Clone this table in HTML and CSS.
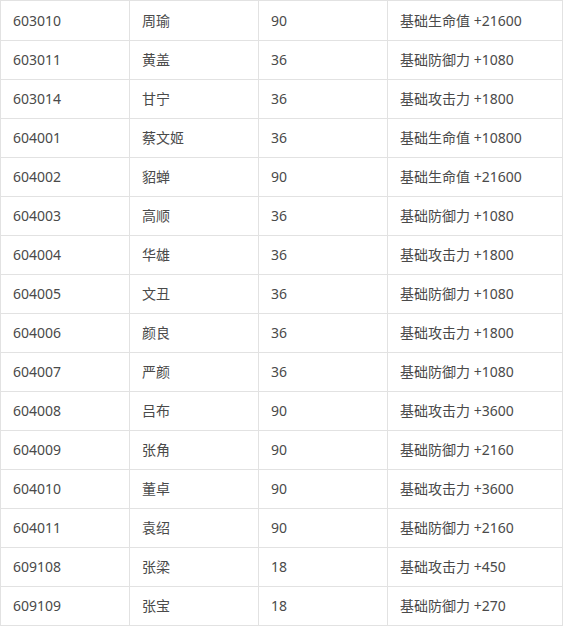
FILE: index.html
```html
<!DOCTYPE html>
<html lang="zh-CN">
<head>
<meta charset="utf-8">
<link rel="stylesheet" href="styles.css">
</head>
<body>
<table class="data">
<colgroup><col class="c1"><col class="c2"><col class="c3"><col class="c4"></colgroup>
<tbody>
<tr><td>603010</td><td>周瑜</td><td>90</td><td>基础生命值 +21600</td></tr>
<tr><td>603011</td><td>黄盖</td><td>36</td><td>基础防御力 +1080</td></tr>
<tr><td>603014</td><td>甘宁</td><td>36</td><td>基础攻击力 +1800</td></tr>
<tr><td>604001</td><td>蔡文姬</td><td>36</td><td>基础生命值 +10800</td></tr>
<tr><td>604002</td><td>貂蝉</td><td>90</td><td>基础生命值 +21600</td></tr>
<tr><td>604003</td><td>高顺</td><td>36</td><td>基础防御力 +1080</td></tr>
<tr><td>604004</td><td>华雄</td><td>36</td><td>基础攻击力 +1800</td></tr>
<tr><td>604005</td><td>文丑</td><td>36</td><td>基础防御力 +1080</td></tr>
<tr><td>604006</td><td>颜良</td><td>36</td><td>基础攻击力 +1800</td></tr>
<tr><td>604007</td><td>严颜</td><td>36</td><td>基础防御力 +1080</td></tr>
<tr><td>604008</td><td>吕布</td><td>90</td><td>基础攻击力 +3600</td></tr>
<tr><td>604009</td><td>张角</td><td>90</td><td>基础防御力 +2160</td></tr>
<tr><td>604010</td><td>董卓</td><td>90</td><td>基础攻击力 +3600</td></tr>
<tr><td>604011</td><td>袁绍</td><td>90</td><td>基础防御力 +2160</td></tr>
<tr><td>609108</td><td>张梁</td><td>18</td><td>基础攻击力 +450</td></tr>
<tr><td>609109</td><td>张宝</td><td>18</td><td>基础防御力 +270</td></tr>
</tbody>
</table>
</body>
</html>
```
FILE: styles.css
```css
html, body {
  margin: 0;
  padding: 0;
  background: #ffffff;
}
.data {
  border-collapse: collapse;
  table-layout: fixed;
  width: 562px;
  font-family: "Noto Sans", "Noto Sans CJK SC", sans-serif;
  font-size: 14px;
  color: #4a4a4a;
}
.c1, .c2, .c3 { width: 129px; }
.c4 { width: 175px; }
.data td {
  border: 1px solid #e2e2e2;
  height: 39px;
  padding: 0 0 0 12px;
  box-sizing: border-box;
  vertical-align: middle;
  line-height: 20px;
  white-space: nowrap;
}
.data tr:first-child td {
  height: 40px;
}
```
